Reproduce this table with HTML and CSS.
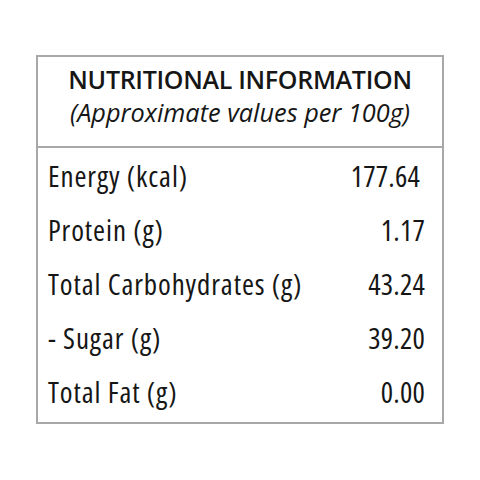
FILE: index.html
```html
<!DOCTYPE html>
<html>
<head>
<meta charset="UTF-8">
<title>Nutritional Information</title>
<link rel="stylesheet" href="styles.css">
</head>
<body>
	<div class="panel">
		<div class="panel-head">
			<h1>NUTRITIONAL INFORMATION</h1>
			<p>(Approximate values per 100g)</p>
		</div>
		<ul class="facts">
			<li><span>Energy (kcal)</span><span class="val val-wide">177.64</span></li>
			<li><span>Protein (g)</span><span class="val">1.17</span></li>
			<li><span>Total Carbohydrates (g)</span><span class="val">43.24</span></li>
			<li><span>- Sugar (g)</span><span class="val">39.20</span></li>
			<li><span>Total Fat (g)</span><span class="val">0.00</span></li>
		</ul>
	</div>
</body>
</html>
```
FILE: styles.css
```css
* {
	margin: 0;
	padding: 0;
	box-sizing: border-box;
}
ul, li {
	list-style: none;
}
body {
	background: #fff;
	color: #161616;
	font-family: "Open Sans", "Noto Sans", sans-serif;
	padding: 55px 0 0 36px;
}
.panel {
	width: 408px;
	height: 369px;
	border: 2px solid #a8a8a8;
}
.panel-head {
	text-align: center;
	padding: 6px 0 0;
	height: 91px;
	border-bottom: 2px solid #a8a8a8;
}
.panel-head h1 {
	font-size: 25px;
	font-weight: 550;
	line-height: 33px;
	letter-spacing: -0.3px;
}
.panel-head p {
	font-size: 25.3px;
	font-style: italic;
	font-weight: 400;
	line-height: 32px;
}
.facts {
	padding: 1px 17px 0 10px;
	font-stretch: 75%;
}
.facts li {
	display: flex;
	justify-content: space-between;
	font-size: 29px;
	line-height: 54px;
	letter-spacing: 0.9px;
}
.facts .val {
	letter-spacing: 0.2px;
}
.val-wide {
	margin-right: 5px;
}
```
